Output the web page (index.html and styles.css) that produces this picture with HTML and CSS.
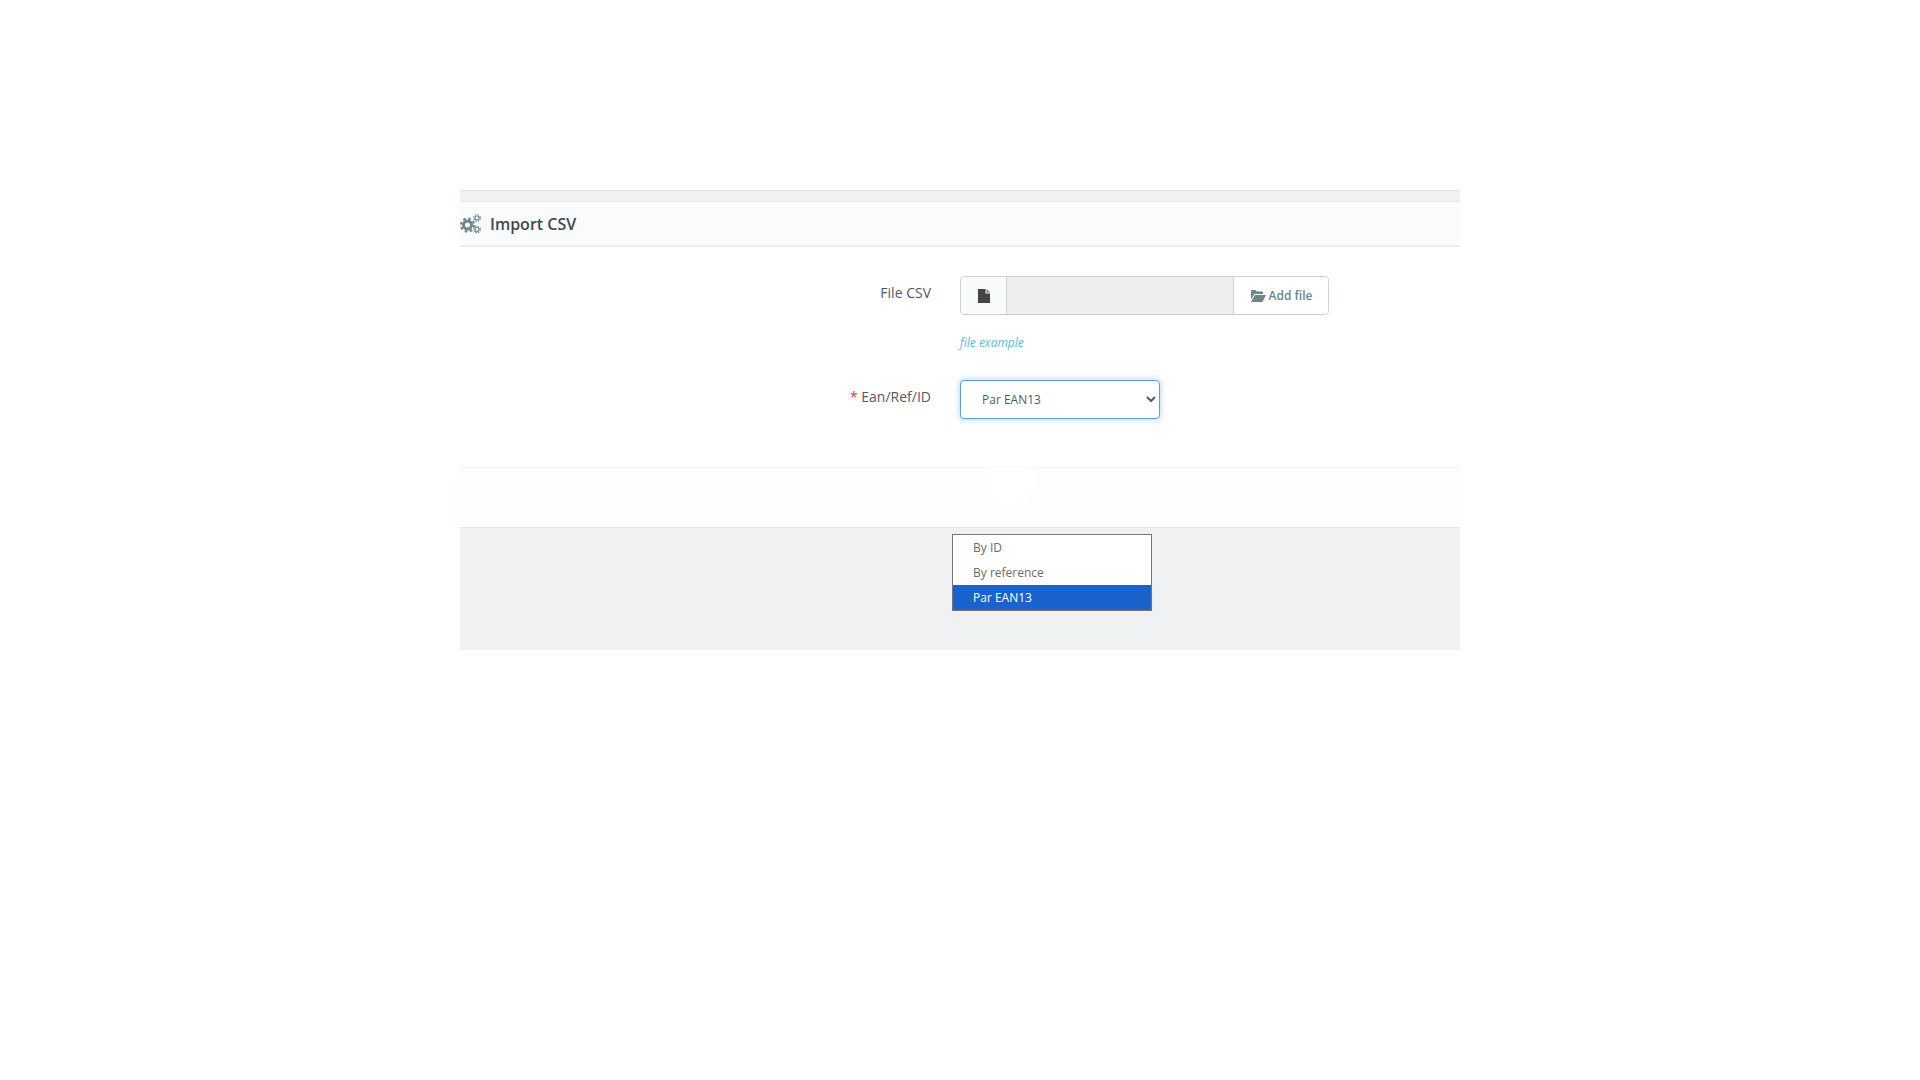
FILE: index.html
```html
<!DOCTYPE html>
<html lang="en">
<head>
    <meta charset="UTF-8">
    <title>Import CSV</title>
    <link rel="stylesheet" href="styles.css">
</head>
<body>
    <div class="panel">
        <div class="top-band"></div>
        <div class="panel-heading">
            <svg class="cogs-icon" width="21" height="20" viewBox="0 0 21 20">
                <g fill="none" stroke="#6c868e">
                    <circle cx="7.500" cy="11" r="4" stroke-width="3"/>
                    <circle cx="7.500" cy="11" r="6.500" stroke-width="2.200" stroke-dasharray="2.500 2.600"/>
                    <circle cx="17" cy="4" r="2" stroke-width="1.200"/>
                    <circle cx="17" cy="4" r="3.300" stroke-width="1.200" stroke-dasharray="1.500 1.100"/>
                    <circle cx="17" cy="15.500" r="2" stroke-width="1.200"/>
                    <circle cx="17" cy="15.500" r="3.300" stroke-width="1.200" stroke-dasharray="1.500 1.100"/>
                </g>
            </svg>
            <span>Import CSV</span>
        </div>

        <div class="form-body">
            <div class="form-row file-row">
                <label class="form-label">File CSV</label>
                <div class="form-control">
                    <div class="input-group">
                        <div class="file-addon">
                            <svg width="12" height="14" viewBox="0 0 12 14">
                                <path d="M0 0h7.500v4.500H12V14H0z" fill="#444"/>
                                <path d="M8.500 0L12 3.500H8.500z" fill="#777"/>
                            </svg>
                        </div>
                        <div class="file-name"></div>
                        <button class="add-file" type="button">
                            <svg width="15" height="12" viewBox="0 0 15 12">
                                <path d="M0 1.200C0 .5.500 0 1.200 0h3.400l1.200 1.500h5c.7 0 1.200.5 1.200 1.200V4H3.500L0 9.500z" fill="#6c868e"/>
                                <path d="M3.800 5H15l-3.500 7H0z" fill="#6c868e"/>
                            </svg>
                            Add file
                        </button>
                    </div>
                    <a class="file-example" href="#">file example</a>
                </div>
            </div>

            <div class="form-row">
                <label class="form-label"><span class="required">*</span> Ean/Ref/ID</label>
                <div class="form-control">
                    <select class="type-select">
                        <option>By ID</option>
                        <option>By reference</option>
                        <option selected>Par EAN13</option>
                    </select>
                </div>
            </div>
        </div>

        <div class="panel-footer">
            <div class="footer-glare"></div>
        </div>

        <div class="grey-area">
            <ul class="select-list">
                <li>By ID</li>
                <li>By reference</li>
                <li class="selected">Par EAN13</li>
            </ul>
        </div>
    </div>
</body>
</html>
```

FILE: styles.css
```css
body {
    margin: 0;
    background: #fff;
    font-family: "Open Sans", "Noto Sans", sans-serif;
    color: #363a41;
}
.panel {
    width: 1000px;
    margin: 190px auto 0;
}
.top-band {
    height: 10px;
    background: #eff1f2;
    border-top: 1px solid #e3e5e6;
    border-bottom: 1px solid #e8eaeb;
}
.panel-heading {
    display: flex;
    align-items: center;
    gap: 9px;
    height: 43px;
    background: #fafbfc;
    border-bottom: 2px solid #eceef0;
    font-size: 16px;
    font-weight: 600;
    color: #43474d;
}
.form-body {
    padding: 29px 0 48px;
}
.form-row {
    display: grid;
    grid-template-columns: 471px 369px;
    column-gap: 29px;
}
.file-row {
    margin-bottom: 29px;
}
.form-label {
    text-align: right;
    font-size: 14px;
    line-height: 19px;
    padding-top: 7px;
    color: #55595f;
}
.required {
    color: #e0364c;
}
.input-group {
    display: flex;
    height: 39px;
    box-sizing: border-box;
    border: 1px solid #c9d3d6;
    border-radius: 4px;
}
.file-addon {
    display: flex;
    align-items: center;
    justify-content: center;
    width: 45px;
    background: #f8fafb;
    border-right: 1px solid #c9d3d6;
    border-radius: 4px 0 0 4px;
}
.file-name {
    flex: 1;
    background: #eeeeee;
}
.add-file {
    display: flex;
    align-items: center;
    justify-content: center;
    gap: 3px;
    width: 95px;
    padding: 0 0 0 1px;
    background: #fff;
    border: 0;
    border-left: 1px solid #c9d3d6;
    border-radius: 0 4px 4px 0;
    font-family: inherit;
    font-size: 12px;
    font-weight: 600;
    color: #6c868e;
}
.file-example {
    display: block;
    margin-top: 19px;
    font-size: 12px;
    line-height: 17px;
    font-style: italic;
    color: #5bbccc;
    text-decoration: none;
}
.type-select {
    display: block;
    width: 200px;
    height: 39px;
    padding: 0 17px;
    background: #fff;
    border: 1px solid #5d9fd6;
    border-radius: 4px;
    box-shadow: 0 0 6px rgba(102, 175, 233, 0.6);
    outline: none;
    font-family: inherit;
    font-size: 12px;
    color: #55595f;
}
.panel-footer {
    position: relative;
    height: 59px;
    background: #fcfdfe;
    border-top: 1px solid #f1f2f3;
    border-bottom: 1px solid #e6e8ea;
}
.footer-glare {
    position: absolute;
    left: 524px;
    top: -1px;
    width: 50px;
    height: 38px;
    background: #fff;
    border-radius: 0 0 40px 40px;
    filter: blur(3px);
}
.grey-area {
    position: relative;
    height: 122px;
    background: #eff1f3;
}
.select-list {
    position: absolute;
    left: 492px;
    top: 6px;
    width: 198px;
    margin: 0;
    padding: 0;
    list-style: none;
    background: #fff;
    border: 1px solid #767676;
    font-size: 12px;
    color: #6b6b6b;
}
.select-list li {
    height: 25px;
    padding-left: 20px;
    line-height: 25px;
}
.select-list .selected {
    background: #1a62cc;
    color: #fff;
}
```
